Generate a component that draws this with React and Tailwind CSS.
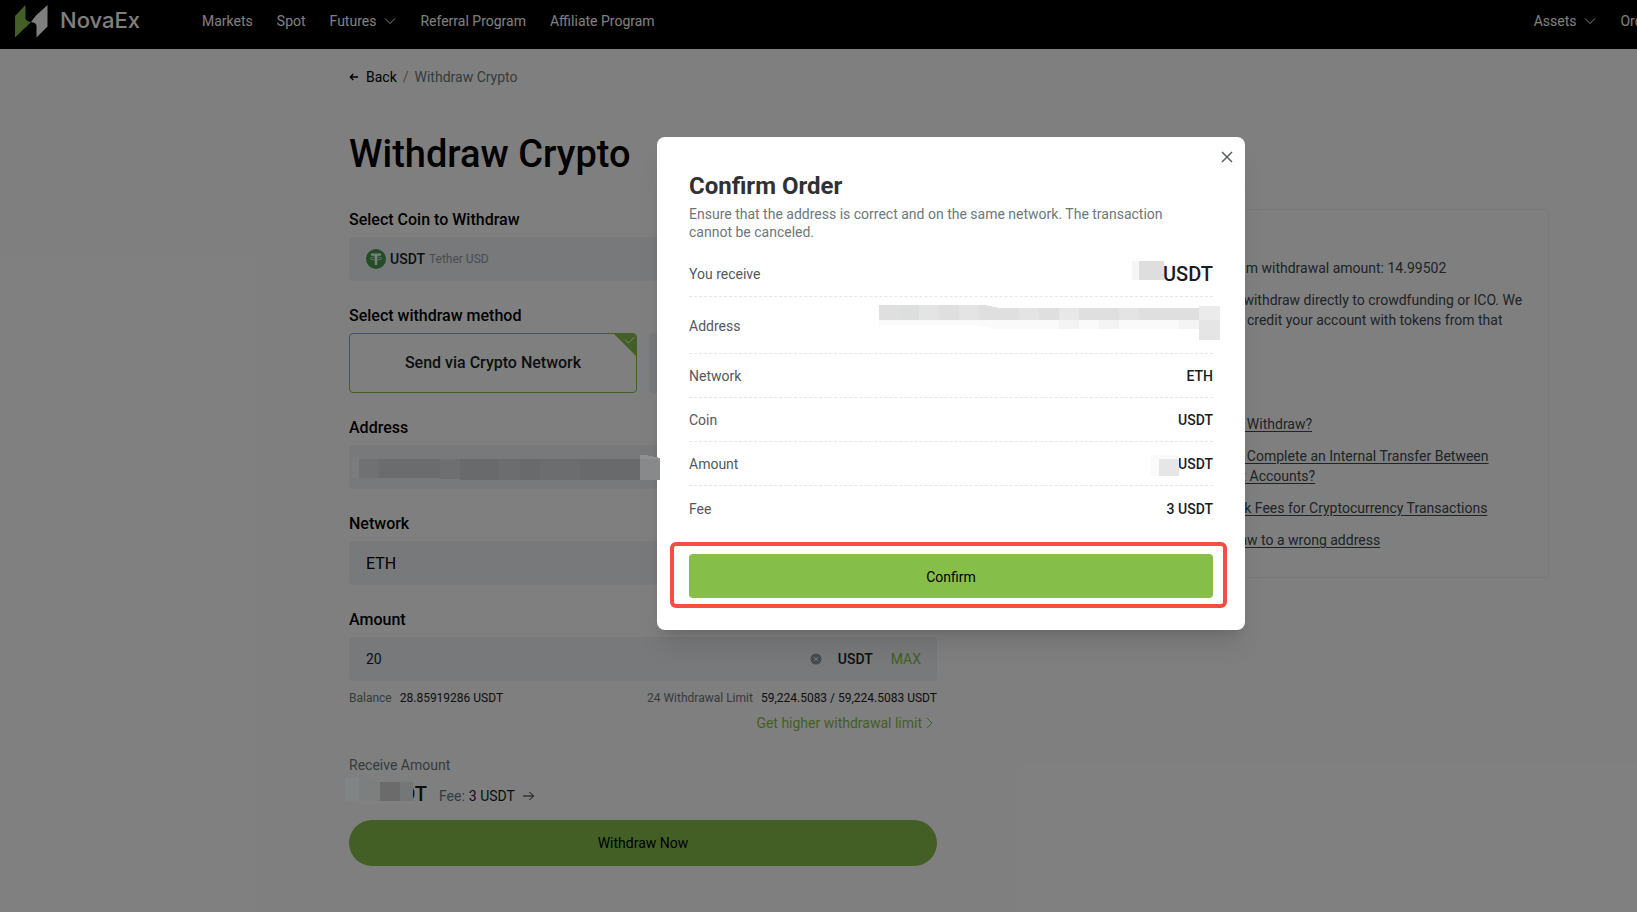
import React, { useState } from 'react';

const FONT = "font-['Roboto','Open_Sans',sans-serif]";

const tips = [
  'Minimum withdrawal amount: 14.99502',
  'Do not withdraw directly to crowdfunding or ICO. We will not credit your account with tokens from that sale.',
];

const faqs = [
  'How to Withdraw?',
  'How to Complete an Internal Transfer Between NovaEx Accounts?',
  'Network Fees for Cryptocurrency Transactions',
  'Withdraw to a wrong address',
];

function App() {
  const [amount, setAmount] = useState('20');
  const [open, setOpen] = useState(true);

  return (
    <div className={`relative min-h-screen w-full overflow-hidden bg-white text-sm text-[#1a1c1e] ${FONT}`}>
      <div className="min-w-[1898px]">
        <Header />
        <main className="mx-auto max-w-[1200px] pt-[18px]">
          <nav className="flex items-center leading-5">
            <a href="#back" className="flex items-center gap-2 text-black">
              <ArrowLeft />
              Back
            </a>
            <span className="mx-1.5 text-[#8a9496]">/</span>
            <span className="text-[#6b787b]">Withdraw Crypto</span>
          </nav>

          <div className="mt-[42px] flex items-start justify-between">
            <WithdrawForm amount={amount} setAmount={setAmount} />
            <HelpCard />
          </div>
        </main>
      </div>

      {open && <ConfirmModal onClose={() => setOpen(false)} />}
    </div>
  );
}

const Header = () => (
  <header className="flex h-[49px] items-center bg-black pb-[7px] pl-[15px] text-white">
    <a href="#home" className="flex items-center gap-3">
      <Logo />
      <span className="font-['Inter',sans-serif] text-[22px] font-medium">NovaEx</span>
    </a>
    <nav className="ml-[62px] flex items-center gap-6">
      <a href="#markets">Markets</a>
      <a href="#spot">Spot</a>
      <a href="#futures" className="flex items-center gap-2">Futures <ChevronDown /></a>
      <a href="#referral">Referral Program</a>
      <a href="#affiliate">Affiliate Program</a>
    </nav>
    <nav className="ml-auto flex items-center gap-6 pr-[236px]">
      <a href="#assets" className="flex items-center gap-2">Assets <ChevronDown /></a>
      <a href="#orders">Orders</a>
    </nav>
  </header>
);

const WithdrawForm = ({ amount, setAmount }) => (
  <form className="w-[588px]" onSubmit={(e) => e.preventDefault()}>
    <h1 className="mb-7 text-[38px] leading-[50px] font-medium text-black">Withdraw Crypto</h1>

    <Field label="Select Coin to Withdraw" id="coin">
      <button id="coin" type="button" className="flex h-11 w-full items-center gap-1 rounded bg-[#eff2f6] px-[17px]">
        <TetherIcon />
        <span className="font-medium">USDT</span>
        <span className="text-xs text-[#8f999f]">Tether USD</span>
      </button>
    </Field>

    <Field label="Select withdraw method" id="method">
      <div className="grid grid-cols-2 gap-3">
        <button id="method" type="button" className="relative h-[60px] overflow-hidden rounded border border-[#86be4a] text-base font-medium">
          Send via Crypto Network
          <SelectedCorner />
        </button>
        <button type="button" aria-label="Internal transfer" className="h-[60px] rounded bg-[#eff2f6]" />
      </div>
    </Field>

    <Field label="Address" id="address">
      <div className="relative">
        <input id="address" type="text" className="h-11 w-full rounded bg-[#eff2f6] px-[17px] text-base" />
        <AddressMask />
      </div>
    </Field>

    <Field label="Network" id="network">
      <input id="network" type="text" defaultValue="ETH" className="h-11 w-full rounded bg-[#eff2f6] px-[17px] text-base text-black" />
    </Field>

    <Field label="Amount" id="amount">
      <div className="flex h-11 items-center rounded bg-[#eff2f6] pr-4 pl-[17px]">
        <input id="amount" type="text" value={amount} onChange={(e) => setAmount(e.target.value)} className="min-w-0 flex-1 bg-transparent outline-none" />
        <button type="button" aria-label="Clear" onClick={() => setAmount('')}>
          <ClearIcon />
        </button>
        <span className="ml-4 font-medium">USDT</span>
        <button type="button" className="ml-[18px] text-[#86be4a]">MAX</button>
      </div>
    </Field>

    <div className="-mt-3.5 flex justify-between text-xs leading-[18px]">
      <p><span className="mr-2 text-[#6b787b]">Balance</span>28.85919286 USDT</p>
      <p><span className="mr-2 text-[#6b787b]">24 Withdrawal Limit</span>59,224.5083 / 59,224.5083 USDT</p>
    </div>
    <div className="mt-1.5 flex justify-end">
      <a href="#limit" className="flex items-center gap-1 pr-1 leading-5 text-[#86be4a]">
        Get higher withdrawal limit <ChevronRight />
      </a>
    </div>

    <p className="mt-[22px] leading-5 text-[#6b787b]">Receive Amount</p>
    <div className="relative mt-[5px] flex h-7 items-center pl-7">
      <span className="text-xl font-medium">USDT</span>
      <ReceiveMask />
      <span className="mt-1 ml-3 flex items-center gap-1">
        <span className="text-[#6b787b]">Fee:</span> 3 USDT <ArrowRight />
      </span>
    </div>
    <button type="submit" className="mt-3 h-[46px] w-full rounded-full bg-[#86be4a] text-black">Withdraw Now</button>
  </form>
);

// Label + control
const Field = ({ label, id, children }) => (
  <div className="mb-[22px]">
    <label htmlFor={id} className="mb-1 block text-base leading-[26px] font-medium text-black">{label}</label>
    {children}
  </div>
);

const HelpCard = () => (
  <aside className="mt-20 w-[380px] rounded border border-[#f0f2f2] pt-12 pr-[18px] pb-[27px] pl-[29px] leading-5 text-[#40484b]">
    <ul className="space-y-3">
      {tips.map((t) => <li key={t}>{t}</li>)}
    </ul>
    <ul className="mt-16 space-y-3">
      {faqs.map((t) => (
        <li key={t}><a href="#faq" className="underline underline-offset-2">{t}</a></li>
      ))}
    </ul>
  </aside>
);

const ConfirmModal = ({ onClose }) => (
  <div className="absolute inset-0 overflow-hidden bg-black/50">
    <div className="flex min-w-[1902px] justify-center pt-[137px]">
      <div role="dialog" aria-labelledby="confirm-title" className="relative w-[588px] rounded-lg bg-white p-8 shadow-xl">
        <button type="button" aria-label="Close" onClick={onClose} className="absolute top-2.5 right-2 p-[3px]">
          <CloseIcon />
        </button>
        <h2 id="confirm-title" className="text-2xl leading-[34px] font-bold text-[#2f3133]">Confirm Order</h2>
        <p className="mt-0.5 pr-10 leading-[18px] text-[#6b787b]">
          Ensure that the address is correct and on the same network. The transaction cannot be canceled.
        </p>

        <dl className="mt-2">
          <Row label="You receive" className="h-12 pt-0.5">
            <span className="text-xl">USDT</span>
            <svg className="absolute right-[49px] bottom-4" width="32" height="19" shapeRendering="crispEdges">
              <path fill="#f6f6f6" d="M0 0h7v19H0z" />
              <path fill="#dedede" d="M7 0h25v19H7z" />
            </svg>
          </Row>
          <Row label="Address" className="h-[57px] pt-0.5">
            <ModalAddressMask />
          </Row>
          <Row label="Network" className="h-11">ETH</Row>
          <Row label="Coin" className="h-11">USDT</Row>
          <Row label="Amount" className="h-11">
            USDT
            <svg className="absolute right-[34px] bottom-[9px]" width="28" height="21" shapeRendering="crispEdges">
              <path fill="#fafafa" d="M0 0h28v4H0zM0 4h8v17H0z" />
              <path fill="#e6e6e6" d="M8 4h20v17H8z" />
            </svg>
          </Row>
          <Row label="Fee" className="h-[46px]" last>3 USDT</Row>
        </dl>

        <div className="mt-2.5 -mr-3.5 -mb-2.5 -ml-[19px] rounded-md border-4 border-[#fb4b45] pt-2 pr-2.5 pb-1.5 pl-[15px]">
          <button type="button" onClick={onClose} className="h-11 w-full rounded bg-[#86be4a] pt-0.5 text-black">Confirm</button>
        </div>
      </div>
    </div>
  </div>
);

const Row = ({ label, className, last, children }) => (
  <div className={`relative flex items-center justify-between ${last ? '' : 'border-b border-dashed border-[#e6e6e6]'} ${className}`}>
    <dt className="text-[#55585b]">{label}</dt>
    <dd className="font-medium text-[#1a1c1e]">{children}</dd>
  </div>
);

/* Masks over private values */

const AddressMask = () => (
  <svg className="absolute top-2.5 left-[3px] z-10" width="308" height="28" shapeRendering="crispEdges">
    <path fill="#7b7c7d" d="M0 2h7v21H0z" />
    <path fill="#6f7172" d="M7 4h20v19H7z" />
    <path fill="#6a6c6d" d="M27 4h61v19H27z" />
    <path fill="#6d6f70" d="M88 4h20v20H88z" />
    <path fill="#696a6b" d="M108 4h180v21H108z" />
    <path fill="#6b6d6e" d="M146 4h22v21h-22zM188 4h40v21h-40z" />
    <path fill="#8f9091" d="M288 0h6l14 3v1h-20z" />
    <path fill="#88898b" d="M288 4h20v21h-20z" />
  </svg>
);

const ReceiveMask = () => (
  <svg className="absolute -top-0.5 -left-1 z-10" width="68" height="28" shapeRendering="crispEdges">
    <path fill="#818484" d="M0 0h21v23H0z" />
    <path fill="#7c7f7e" d="M14 0h7l14 4v19H14z" />
    <path fill="#6b6b6b" d="M35 4h20v19H35z" />
    <path fill="#737777" d="M55 4h13v19H55z" />
    <path fill="#828181" d="M12 23h56v3H12z" />
  </svg>
);

const ModalAddressMask = () => (
  <svg className="absolute top-2 -right-[7px]" width="345" height="38" shapeRendering="crispEdges">
    <path fill="#fafafa" d="M4 15h321v9H120l-20-4H4z" />
    <path fill="#f4f4f4" d="M184 15h20v9h-20zM224 15h20v9h-20zM304 15h21v9h-21z" />
    <path fill="#dfdfdf" d="M4 0h106l14 3h200v12H4z" />
    <path fill="#dddfde" d="M24 0h20v15H24z" />
    <path fill="#e4e4e4" d="M44 0h20v15H44zM84 0h20v15H84zM144 3h20v12h-20zM244 3h20v12h-20z" />
    <path fill="#e8e8e8" d="M184 3h20v12h-20z" />
    <path fill="#ebebeb" d="M324 1h21v14h-21z" />
    <path fill="#e5e5e5" d="M324 15h21v20h-21z" />
  </svg>
);

/* Icons */

const Logo = () => (
  <svg width="33" height="33" viewBox="0 0 33 33">
    <path fill="#86be4a" d="M0 11 10.500 0v13.500q1 3 5.500 3.500L11 22 0 32.500z" />
    <path fill="#fff" d="M32.500 0 21 10.500 16 17q5 .5 5.500 3.500v12l11-11z" />
  </svg>
);

const ChevronDown = () => (
  <svg width="12" height="8" viewBox="0 0 12 8" fill="none" stroke="currentColor">
    <path d="m1 1.500 5 5 5-5" />
  </svg>
);

const ChevronRight = () => (
  <svg width="7" height="12" viewBox="0 0 7 12" fill="none" stroke="currentColor">
    <path d="m1 1 5 5-5 5" />
  </svg>
);

const ArrowLeft = () => (
  <svg width="9" height="8" viewBox="0 0 9 8" fill="none" stroke="currentColor" strokeWidth="1.300">
    <path d="M9 4H1.500M4.300 1 1.300 4l3 3" />
  </svg>
);

const ArrowRight = () => (
  <svg className="ml-1" width="12" height="10" viewBox="0 0 12 10" fill="none" stroke="currentColor">
    <path d="M0 5h10.500M6.500 1l4 4-4 4" />
  </svg>
);

const CloseIcon = () => (
  <svg width="14" height="14" viewBox="0 0 14 14" fill="none" stroke="#5b5e63" strokeWidth="1.500">
    <path d="m2 2 10 10M12 2 2 12" />
  </svg>
);

const ClearIcon = () => (
  <svg width="12" height="12" viewBox="0 0 12 12">
    <circle cx="6" cy="6" r="5.500" fill="#8a979d" />
    <path d="m3.700 3.700 4.600 4.600m0-4.600L3.700 8.300" stroke="#eff2f6" />
  </svg>
);

const SelectedCorner = () => (
  <svg className="absolute top-0 right-0" width="22" height="22" viewBox="0 0 22 22">
    <path fill="#86be4a" d="M0 0h22v22z" />
    <path fill="none" stroke="#fff" d="m11 5.500 3.500 3.500L20.500 3" />
  </svg>
);

const TetherIcon = () => (
  <svg width="20" height="20" viewBox="0 0 20 20">
    <circle cx="10" cy="10" r="10" fill="#469a4c" />
    <path fill="#fff" d="M5 4.500h10v2.300h-3.800V16H8.800V6.800H5z" />
    <ellipse cx="10" cy="9.500" rx="5.800" ry="1.500" fill="none" stroke="#fff" strokeWidth=".7" />
  </svg>
);

export default App;
